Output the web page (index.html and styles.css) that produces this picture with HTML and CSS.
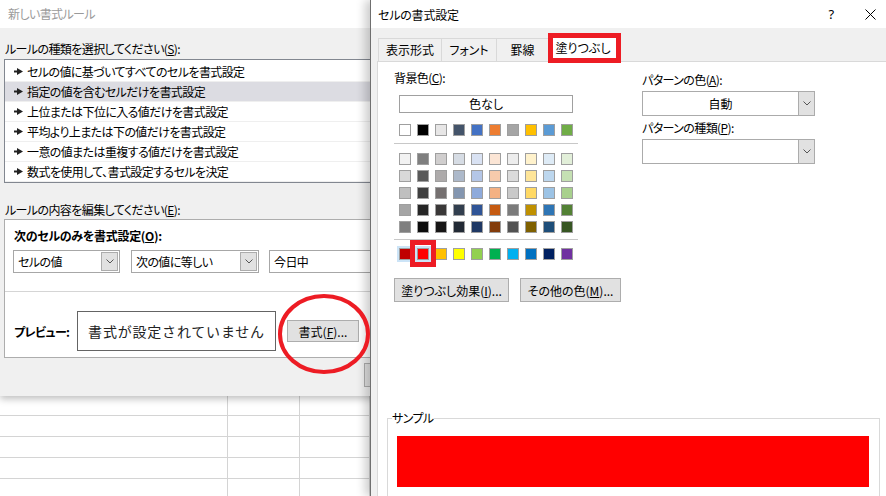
FILE: index.html
```html
<!DOCTYPE html>
<html lang="ja">
<head>
<meta charset="utf-8">
<title>セルの書式設定</title>
<link rel="stylesheet" href="styles.css">
</head>
<body>
<div class="screen">
  <div class="left-pane">
    <div class="rule-dialog">
      <div class="rd-title">新しい書式ルール</div>
      <div class="rd-body">
        <div class="rd-label">ルールの種類を選択してください(<u>S</u>):</div>
        <ul class="rule-list">
          <li><svg class="arrow" width="9" height="7" viewBox="0 0 9 7"><rect x="0" y="2.5" width="4" height="2"/><polygon points="3,0 9,3.5 3,7"/></svg>セルの値に基づいてすべてのセルを書式設定</li>
          <li class="sel"><svg class="arrow" width="9" height="7" viewBox="0 0 9 7"><rect x="0" y="2.5" width="4" height="2"/><polygon points="3,0 9,3.5 3,7"/></svg>指定の値を含むセルだけを書式設定</li>
          <li><svg class="arrow" width="9" height="7" viewBox="0 0 9 7"><rect x="0" y="2.5" width="4" height="2"/><polygon points="3,0 9,3.5 3,7"/></svg>上位または下位に入る値だけを書式設定</li>
          <li><svg class="arrow" width="9" height="7" viewBox="0 0 9 7"><rect x="0" y="2.5" width="4" height="2"/><polygon points="3,0 9,3.5 3,7"/></svg>平均より上または下の値だけを書式設定</li>
          <li><svg class="arrow" width="9" height="7" viewBox="0 0 9 7"><rect x="0" y="2.5" width="4" height="2"/><polygon points="3,0 9,3.5 3,7"/></svg>一意の値または重複する値だけを書式設定</li>
          <li><svg class="arrow" width="9" height="7" viewBox="0 0 9 7"><rect x="0" y="2.5" width="4" height="2"/><polygon points="3,0 9,3.5 3,7"/></svg>数式を使用して、書式設定するセルを決定</li>
        </ul>
        <div class="rd-label rd-label2">ルールの内容を編集してください(<u>E</u>):</div>
        <div class="edit-box">
          <div class="eb-head">次のセルのみを書式設定(<u>O</u>):</div>
          <div class="eb-controls">
            <div class="combo c1"><span class="txt">セルの値</span><span class="dd"><svg width="8" height="5" viewBox="0 0 8 5"><path d="M0.5 0.5 L4 4 L7.5 0.5" fill="none" stroke="#555" stroke-width="1"/></svg></span></div>
            <div class="combo c2"><span class="txt">次の値に等しい</span><span class="dd"><svg width="8" height="5" viewBox="0 0 8 5"><path d="M0.5 0.5 L4 4 L7.5 0.5" fill="none" stroke="#555" stroke-width="1"/></svg></span></div>
            <div class="combo c3"><span class="txt">今日中</span></div>
          </div>
          <div class="eb-sep"></div>
          <div class="eb-preview">
            <span class="pv-label">プレビュー:</span>
            <div class="pv-box">書式が設定されていません</div>
            <button class="btn fmt">書式(<u>F</u>)...</button>
          </div>
        </div>
        <div class="rd-footer"><button class="btn ok" aria-label="OK"></button></div>
      </div>
    </div>
    <div class="sheet">
      <div class="cell"></div><div class="cell"></div><div class="cell"></div>
      <div class="cell"></div><div class="cell"></div><div class="cell"></div>
      <div class="cell"></div><div class="cell"></div><div class="cell"></div>
      <div class="cell"></div><div class="cell"></div><div class="cell"></div>
      <div class="cell"></div><div class="cell"></div><div class="cell"></div>
    </div>
    <svg class="annot-ellipse" width="94" height="82" viewBox="0 0 94 82"><ellipse cx="47" cy="41" rx="44" ry="38" fill="none" stroke="#ed1c24" stroke-width="4"/></svg>
  </div>

  <div class="fmt-dialog">
    <div class="fd-title">
      <span class="fd-name">セルの書式設定</span>
      <span class="help">?</span>
      <svg class="close" width="11" height="11" viewBox="0 0 11 11"><path d="M0.5 0.5 L10.5 10.5 M10.5 0.5 L0.5 10.5" stroke="#000" stroke-width="1" fill="none"/></svg>
    </div>
    <div class="tabs">
      <div class="tab t1">表示形式</div>
      <div class="tab t2">フォント</div>
      <div class="tab t3">罫線</div>
      <div class="tab t4 active">塗りつぶし</div>
    </div>
    <div class="panel">
      <div class="cols">
        <div class="bg-col">
          <div class="lbl">背景色(<u>C</u>):</div>
          <div class="nocolor">色なし</div>
          <div class="swrow first">
            <span class="sw" style="background:#ffffff"></span><span class="sw" style="background:#000000"></span><span class="sw" style="background:#e7e6e6"></span><span class="sw" style="background:#44546a"></span><span class="sw" style="background:#4472c4"></span><span class="sw" style="background:#ed7d31"></span><span class="sw" style="background:#a5a5a5"></span><span class="sw" style="background:#ffc000"></span><span class="sw" style="background:#5b9bd5"></span><span class="sw" style="background:#70ad47"></span>
          </div>
          <div class="sep"></div>
          <div class="theme">
            <div class="swrow">
              <span class="sw" style="background:#f2f2f2"></span><span class="sw" style="background:#7f7f7f"></span><span class="sw" style="background:#d0cece"></span><span class="sw" style="background:#d6dce4"></span><span class="sw" style="background:#d9e2f3"></span><span class="sw" style="background:#fbe5d5"></span><span class="sw" style="background:#ededed"></span><span class="sw" style="background:#fff2cc"></span><span class="sw" style="background:#deebf6"></span><span class="sw" style="background:#e2efd9"></span>
            </div>
            <div class="swrow">
              <span class="sw" style="background:#d8d8d8"></span><span class="sw" style="background:#595959"></span><span class="sw" style="background:#aeabab"></span><span class="sw" style="background:#adb9ca"></span><span class="sw" style="background:#b4c6e7"></span><span class="sw" style="background:#f7cbac"></span><span class="sw" style="background:#dbdbdb"></span><span class="sw" style="background:#fee599"></span><span class="sw" style="background:#bdd7ee"></span><span class="sw" style="background:#c5e0b3"></span>
            </div>
            <div class="swrow">
              <span class="sw" style="background:#bfbfbf"></span><span class="sw" style="background:#3f3f3f"></span><span class="sw" style="background:#757070"></span><span class="sw" style="background:#8496b0"></span><span class="sw" style="background:#8eaadb"></span><span class="sw" style="background:#f4b183"></span><span class="sw" style="background:#c9c9c9"></span><span class="sw" style="background:#ffd965"></span><span class="sw" style="background:#9cc3e5"></span><span class="sw" style="background:#a8d08d"></span>
            </div>
            <div class="swrow">
              <span class="sw" style="background:#a5a5a5"></span><span class="sw" style="background:#262626"></span><span class="sw" style="background:#3a3838"></span><span class="sw" style="background:#323f4f"></span><span class="sw" style="background:#2f5496"></span><span class="sw" style="background:#c55a11"></span><span class="sw" style="background:#7b7b7b"></span><span class="sw" style="background:#bf9000"></span><span class="sw" style="background:#2e75b5"></span><span class="sw" style="background:#538135"></span>
            </div>
            <div class="swrow">
              <span class="sw" style="background:#7f7f7f"></span><span class="sw" style="background:#0c0c0c"></span><span class="sw" style="background:#171616"></span><span class="sw" style="background:#222a35"></span><span class="sw" style="background:#1f3864"></span><span class="sw" style="background:#833c0b"></span><span class="sw" style="background:#525252"></span><span class="sw" style="background:#7f6000"></span><span class="sw" style="background:#1e4e79"></span><span class="sw" style="background:#375623"></span>
            </div>
          </div>
          <div class="sep sep2"></div>
          <div class="swrow std">
            <span class="sw hot" style="background:#c00000"></span><span class="sw hot" style="background:#ff0000"></span><span class="sw" style="background:#ffc000"></span><span class="sw" style="background:#ffff00"></span><span class="sw" style="background:#92d050"></span><span class="sw" style="background:#00b050"></span><span class="sw" style="background:#00b0f0"></span><span class="sw" style="background:#0070c0"></span><span class="sw" style="background:#002060"></span><span class="sw" style="background:#7030a0"></span>
          </div>
          <div class="btnrow">
            <button class="btn effect">塗りつぶし効果(<u>I</u>)...</button>
            <button class="btn more">その他の色(<u>M</u>)...</button>
          </div>
        </div>
        <div class="pat-col">
          <div class="lbl">パターンの色(<u>A</u>):</div>
          <div class="select"><span class="txt">自動</span><span class="dd"><svg width="8" height="5" viewBox="0 0 8 5"><path d="M0.5 0.5 L4 4 L7.5 0.5" fill="none" stroke="#555" stroke-width="1"/></svg></span></div>
          <div class="lbl lbl2">パターンの種類(<u>P</u>):</div>
          <div class="select"><span class="txt"></span><span class="dd"><svg width="8" height="5" viewBox="0 0 8 5"><path d="M0.5 0.5 L4 4 L7.5 0.5" fill="none" stroke="#555" stroke-width="1"/></svg></span></div>
        </div>
      </div>
      <fieldset class="sample">
        <legend>サンプル</legend>
        <div class="sample-fill"></div>
      </fieldset>
    </div>
    <div class="mark mark-tab"></div>
    <div class="mark mark-swatch"></div>
  </div>
</div>
</body>
</html>
```

FILE: styles.css
```css
* { box-sizing: border-box; }
html, body { margin: 0; padding: 0; }
body {
  width: 886px;
  height: 496px;
  overflow: hidden;
  background: #fff;
  color: #000;
  font-family: "Noto Sans CJK JP", "Noto Sans", sans-serif;
  font-size: 12px;
  letter-spacing: -0.6px;
  font-feature-settings: "palt";
}
u { text-decoration: underline; text-underline-offset: 1px; }

.screen { display: flex; width: 886px; height: 496px; }

/* ---------- left: new rule dialog ---------- */
.left-pane {
  width: 370px;
  flex: none;
  position: relative;
  overflow: hidden;
  display: flex;
  flex-direction: column;
}
.rule-dialog {
  width: 440px;
  height: 396px;
  flex: none;
  background: #f0f0f0;
  position: relative;
  z-index: 1;
  box-shadow: 0 3px 7px rgba(0, 0, 0, 0.25);
}
.rd-title {
  height: 28px;
  line-height: 28px;
  padding-left: 8px;
  background: #fff;
  color: #9a9a9a;
}
.rd-body { padding-left: 4px; }
.rd-label { line-height: 16px; padding-top: 13px; padding-left: 1px; }
.rd-label2 { padding-top: 19px; }

.rule-list {
  list-style: none;
  margin: 2px 0 0;
  padding: 2px 0 0;
  height: 124px;
  border: 1px solid #828790;
  background: #fff;
}
.rule-list li {
  height: 20px;
  display: flex;
  align-items: center;
  padding-left: 9px;
  border-bottom: 1px solid #efefef;
  white-space: nowrap;
}
.rule-list li.sel { background: #dcdce2; }
.arrow { margin-right: 4px; flex: none; fill: #222; }

.edit-box {
  margin-top: 1px;
  height: 139px;
  border: 1px solid #adadad;
  background: #fff;
}
.eb-head { font-weight: bold; line-height: 16px; padding: 8px 0 0 9px; letter-spacing: -0.3px; }
.eb-controls { display: flex; margin: 6px 0 0 8px; height: 23px; gap: 11px; }
.combo {
  display: flex;
  height: 23px;
  border: 1px solid #a7a7a7;
  background: #fff;
}
.combo .txt { flex: 1; padding-left: 4px; line-height: 21px; white-space: nowrap; }
.combo .dd, .select .dd {
  width: 17px;
  margin: 1px;
  background: #e1e1e1;
  border: 1px solid #acacac;
  display: flex;
  align-items: center;
  justify-content: center;
}
.c1 { width: 107px; }
.c2 { width: 128px; }
.c3 { width: 150px; margin-left: -1px; }
.eb-sep { margin-top: 18px; height: 1px; background: #d5d5d5; }
.eb-preview {
  display: flex;
  align-items: center;
  margin-top: 19px;
  padding-left: 9px;
  height: 40px;
}
.pv-label { width: 63px; font-weight: bold; flex: none; }
.pv-box {
  width: 199px;
  height: 40px;
  flex: none;
  border: 1px solid #646464;
  text-align: center;
  line-height: 38px;
  font-size: 14px;
  letter-spacing: 0.8px;
  font-feature-settings: normal;
  color: #222;
}
.btn {
  font: inherit;
  font-feature-settings: "palt";
  letter-spacing: 0;
  color: #000;
  background: #e1e1e1;
  border: 1px solid #adadad;
  padding: 0;
  margin: 0;
}
.fmt { margin-left: 11px; width: 72px; height: 22px; }
.rd-footer { padding: 5px 0 0 360px; }
.ok { width: 75px; height: 24px; display: block; }

.sheet {
  flex: 1;
  display: grid;
  grid-template-columns: 228px 72px 1fr;
  grid-template-rows: 20px 21px 21px 21px 21px;
  background: #fff;
}
.cell { border-right: 1px solid #d4d4d4; border-bottom: 1px solid #d4d4d4; }

.annot-ellipse { position: absolute; left: 277px; top: 293px; z-index: 3; }

/* ---------- right: format cells dialog ---------- */
.fmt-dialog {
  width: 516px;
  flex: none;
  position: relative;
  z-index: 2;
  background: #f0f0f0;
  border-left: 1px solid #6f6f6f;
  box-shadow: -5px 0 9px rgba(0, 0, 0, 0.2);
  overflow: hidden;
}
.fd-title {
  height: 28px;
  display: flex;
  align-items: center;
  padding-left: 7px;
  background: #fff;
  letter-spacing: -0.2px;
}
.fd-name { flex: 1; }
.help { font-size: 13px; margin-right: 31px; font-family: "Noto Sans", sans-serif; }
.close { margin-right: 10px; }

.tabs { display: flex; margin-top: 10px; padding-left: 7px; height: 23px; letter-spacing: 0; }
.tab {
  height: 23px;
  line-height: 21px;
  text-align: center;
  border: 1px solid #d9d9d9;
  border-bottom: none;
  margin-right: -1px;
  background: #f0f0f0;
}
.t1 { width: 64px; }
.t2 { width: 56px; }
.t3 { width: 53px; }
.t4 { width: 70px; }
.tab.active {
  background: #fff;
  height: 26px;
  margin-top: -2px;
  position: relative;
  z-index: 1;
}

.panel {
  margin-left: 6px;
  width: 530px;
  height: 440px;
  border: 1px solid #d9d9d9;
  background: #fff;
}
.cols { display: flex; padding-left: 16px; }
.bg-col { width: 232px; flex: none; }
.lbl { line-height: 16px; margin-top: 8px; white-space: nowrap; }
.nocolor {
  margin: 9px 0 0 5px;
  width: 174px;
  height: 18px;
  border: 1px solid #a0a0a0;
  text-align: center;
  line-height: 16px;
  letter-spacing: 0;
}
.swrow { display: flex; gap: 6px; margin-left: 5px; height: 12px; }
.swrow.first { margin-top: 11px; }
.sw { width: 12px; height: 12px; border: 1px solid #9f9f9f; flex: none; }
.sw.hot { box-shadow: 0 0 0 2px #cce4f7; }
.sep { margin-top: 7px; width: 184px; height: 1px; background: #c8c8c8; }
.sep2 { margin-top: 6px; }
.theme { margin-top: 9px; display: flex; flex-direction: column; gap: 5px; }
.swrow.std { margin-top: 8px; }
.btnrow { display: flex; gap: 11px; margin-top: 18px; }
.effect { width: 115px; height: 24px; }
.more { width: 101px; height: 24px; flex: none; }

.pat-col { margin-left: 16px; width: 173px; flex: none; }
.pat-col .lbl { margin-top: 10px; }
.pat-col .lbl2 { margin-top: 4px; }
.select {
  margin-top: 3px;
  width: 173px;
  height: 25px;
  display: flex;
  border: 1px solid #ababab;
  background: #fff;
}
.select .txt { flex: 1; text-align: center; line-height: 23px; letter-spacing: 0; }
.select .dd { margin: 0; border-top: none; border-right: none; border-bottom: none; width: 16px; }

.sample {
  margin: 108px 0 0 9px;
  width: 493px;
  border: 1px solid #d9d9d9;
  padding: 0 10px 10px 9px;
  min-inline-size: 0;
}
.sample legend { padding: 0; margin-left: -5px; line-height: 16px; }
.sample-fill { margin-top: 10px; height: 51px; background: #ff0000; }

.mark { position: absolute; z-index: 5; border: 5px solid #ed1c24; }
.mark-tab { left: 177px; top: 33px; width: 73px; height: 30px; }
.mark-swatch { left: 39px; top: 240px; width: 26px; height: 27px; }
```
